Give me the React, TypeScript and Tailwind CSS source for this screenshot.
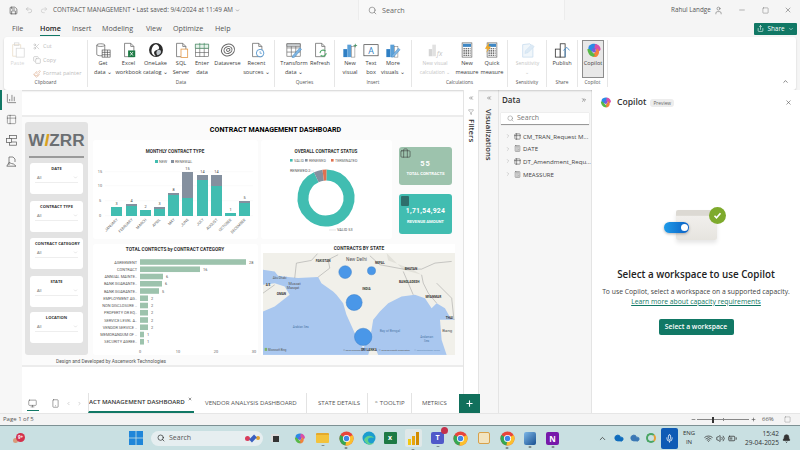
import React from "react";
import { Save, Undo2, Redo2, Search, User, Minus, Square, X, Share, ChevronDown, ChevronUp, ChevronLeft, ChevronRight, ChevronsLeft, ChevronsRight, Scissors, Copy, Paintbrush, Filter, Monitor, Smartphone, Plus, Wifi, Volume2, BatteryMedium, Mic, Bell, Cloud, Briefcase, Calculator, Table2, BarChart3 } from "lucide-react";

const B = "#5f5f5f";
const Doc = ({ c = B }: { c?: string }) => <path d="M4 1.5h7l3.5 3.5v11.5H4z M11 1.5V5h3.5" fill="#fff" stroke={c} strokeWidth="0.8" />;
const Bars = ({ a = "#2f7fc4", b = "#5aa0d8" }: { a?: string; b?: string }) => (<g><rect x="1.5" y="8" width="4.5" height="9" fill={a} /><rect x="6" y="3" width="4.5" height="14" fill={b} /><rect x="10.5" y="5" width="4" height="12" fill="#fff" stroke="#777" strokeWidth=".6" /></g>);
const Grid = ({ x = 1, y = 2, w = 15, h = 14, c = B }: { x?: number; y?: number; w?: number; h?: number; c?: string }) => (
  <g fill="none" stroke={c} strokeWidth=".7"><rect x={x} y={y} width={w} height={h} fill="#fff" /><path d={`M${x} ${y + h / 3}h${w}M${x} ${y + (2 * h) / 3}h${w}M${x + w / 3} ${y}v${h}M${x + (2 * w) / 3} ${y}v${h}`} /></g>
);
const Calc = () => (<g><rect x="3.5" y="1" width="11" height="16" fill="#fff" stroke="#555" strokeWidth=".7" /><rect x="4.5" y="2" width="9" height="3.5" fill="#3f88c5" /><path d="M5 7.5h8M5 10h8M5 12.5h8M5 15h8" stroke="#444" strokeWidth="1.2" strokeDasharray="1.6 .8" /></g>);
const CopilotMark = ({ s = 18 }: { s?: number }) => (
  <svg width={s} height={s} viewBox="0 0 18 18" fill="none">
    <path d="M5 3.5 C8 1.5 11 1.5 13 3 L10 9 L5 11 C3 8 3 5 5 3.5z" fill="#2b8ae6" />
    <path d="M10.5 2.5 C13.5 2 16.5 4.5 16.5 8 C16 9.5 14.5 10.5 13 10 L10 6.5z" fill="#d94fa8" />
    <path d="M13 7 C15.5 9 15.5 13 13 15 C11 16.5 8.5 16 7.5 14.5 L11 10z" fill="#f2823c" />
    <path d="M2.5 8 C3 11 4.5 15 8.5 15.5 C10 15.5 11 14 10 13 L6.5 9.5 C5 7.5 3 7 2.5 8z" fill="#58b947" />
    <path d="M7.5 7 L11 6.5 L11.5 10.5 L8 11z" fill="#7c5ad8" />
  </svg>
);

const I = ({ children }: { children: React.ReactNode }) => <svg width="16" height="16" viewBox="0 0 18 18" fill="none">{children}</svg>;

const icons: Record<string, React.ReactNode> = {
  get: <I><path d="M2 3.5C2 1.5 11 1.5 11 3.5V14C11 16 2 16 2 14z" fill="#fff" stroke={B} strokeWidth=".8" /><path d="M2 3.5C2 5.5 11 5.5 11 3.5" stroke={B} strokeWidth=".8" /><Grid x={8} y={9} w={9} h={8} c="#444" /></I>,
  excel: <I><Doc /><rect x="8" y="9.5" width="8" height="7.5" fill="#1d7a45" /><path d="M10.3 11.3l3.2 4M13.5 11.3l-3.2 4" stroke="#fff" strokeWidth=".9" /></I>,
  lake: <I><circle cx="9" cy="9" r="7.8" fill="#2a2a2a" /><path d="M9 2.5C13 4 14 8 10 9S6 13 9 16C4.5 15 3 11 4.5 7S8 3 9 2.5z" fill="#fff" /><path d="M11 9c3-1 4 1 3.5 3-.8 1.6-2.4 2.7-4 3C9 13 9 10.5 11 9z" fill="#bfc6cc" /></I>,
  sql: <I><Doc /><rect x="9" y="8" width="7.5" height="9.5" fill="#fff" stroke="#e39a4a" strokeWidth=".9" /></I>,
  enter: <I><Grid x={1.5} y={2.5} w={15} h={14} /><path d="M1.5 2.5h15v4.6h-15z" fill="#e8f2ec" stroke="#3c8a5c" strokeWidth=".7" /><path d="M6.5 1v6M11.5 1v6" stroke="#3c8a5c" strokeWidth=".7" /></I>,
  dv: <I><g stroke="#666" strokeWidth="1.1" fill="none"><ellipse cx="9" cy="9" rx="7.5" ry="6.5" transform="rotate(-25 9 9)" /><ellipse cx="9" cy="9" rx="4.6" ry="3.8" transform="rotate(-25 9 9)" /><ellipse cx="9.3" cy="9" rx="2" ry="1.5" transform="rotate(-25 9 9)" /></g></I>,
  recent: <I><Doc /><circle cx="12.5" cy="12.5" r="4.2" fill="#fff" stroke="#3b86c8" strokeWidth=".9" /><path d="M12.5 10.3v2.4h2" stroke="#3b86c8" strokeWidth=".7" /></I>,
  transform: <I><Grid x={1} y={2} w={15} h={14} /><path d="M1 2h15v3H1z" fill="#cfd3d6" stroke={B} strokeWidth=".6" /><path d="M7.5 15.5l8-9 2 1.7-8 9-2.5.6z" fill="#7fb5e2" stroke="#3f86c2" strokeWidth=".5" /></I>,
  refresh: <I><Doc /><path d="M9 12.5a3.6 3.6 0 0 1 6.2-2.2M16 12.5a3.6 3.6 0 0 1-6.2 2.2" stroke="#4aa564" strokeWidth="1.2" /></I>,
  newv: <I><Bars /><path d="M15 2v4M13 4h4" stroke="#3c8a5c" strokeWidth=".9" /></I>,
  text: <I><rect x="1" y="3" width="16" height="12.5" fill="#fff" stroke="#444" strokeWidth=".8" /><text x="9" y="13" fontSize="10" textAnchor="middle" fill="#2f7fc4" fontFamily="Open Sans">A</text></I>,
  more: <I><Bars /><path d="M8 15l7-8 2 1.6-7 8-2.4.6z" fill="#7fb5e2" stroke="#3f86c2" strokeWidth=".5" /></I>,
  calc: <I><g opacity=".35"><rect x="2" y="8" width="4" height="8" fill="#888" /><rect x="6" y="3" width="4" height="13" fill="#aaa" /><text x="11" y="16" fontSize="8" fontStyle="italic" fill="#555">fx</text></g></I>,
  meas: <I><Calc /></I>,
  quick: <I><Calc /><path d="M6 0L1 7.5h3L2.5 12 8 5H5z" fill="#f0a825" /></I>,
  sens: <I><g opacity=".4"><path d="M3 3l8-1 3.5 3.5v11.5H3z" fill="#dce9f5" stroke="#6ba3d3" strokeWidth=".8" /><path d="M6 10l7-7 3 2-7 7-3.5 1z" fill="#aacbe8" stroke="#6ba3d3" strokeWidth=".5" /></g></I>,
  pub: <I><rect x="1.5" y="8" width="5.5" height="9" fill="#fff" stroke="#333" strokeWidth=".9" /><rect x="7" y="2" width="5.5" height="15" fill="#fff" stroke="#333" strokeWidth=".9" /><path d="M12.5 17V8M10.5 9.5l4-3.5 3 3.5" stroke="#3b86c8" strokeWidth=".9" /></I>,
  copilot: <CopilotMark s={17} />,
};

function Btn({ w, icon, lines, ml = 0, dim, active }: { w: number; icon: string; lines: string[]; ml?: number; dim?: boolean; active?: boolean }) {
  return (
    <div style={{ width: w, marginLeft: ml }} className={`flex flex-col items-center shrink-0 ${active ? "bg-[#e8e8e8] border border-[#8c8c8c] h-[38px] pt-[1px]" : "pt-[2px]"}`}>
      <div className="h-[16px] flex items-center justify-center">{icons[icon]}</div>
      <div className={`mt-[1px] text-[5.6px] leading-[8.6px] text-center whitespace-nowrap ${dim ? "text-[#c4c4c4] text-[5px]" : "text-[#3c3c3c]"}`}>
        {lines.map((l) => <div key={l}>{l}</div>)}
      </div>
    </div>
  );
}

function Group({ w, label, children, pl = 0 }: { w: number; label: string; children: React.ReactNode; pl?: number }) {
  return (
    <div style={{ width: w, paddingLeft: pl }} className="h-[47px] mt-[3px] border-r border-[#e6e6e6] flex flex-col shrink-0">
      <div className="flex h-[38px]">{children}</div>
      <div className="h-[9px] text-[4.8px] leading-[9px] text-center text-[#555]" style={{ marginLeft: -pl }}>{label}</div>
    </div>
  );
}

const Slicer = ({ title, mt = 7 }: { title: string; mt?: number }) => (
  <div style={{ marginTop: mt }} className="w-[53px] h-[31px] mx-auto bg-white rounded-[3px] px-[5px] pt-[2px]">
    <div className="text-[4.1px] font-bold leading-[7px] text-center text-[#333] whitespace-nowrap">{title}</div>
    <div className="mt-[3px] flex justify-between items-center border-b border-[#eeeeee] pb-[1px] text-[4px] text-[#666] leading-[6px]"><span className="pl-[2px]">All</span><ChevronDown size={5} strokeWidth={1} className="text-[#888]" /></div>
  </div>
);

const monthly: [string, number, number, number][] = [
  ["JANUARY", 9, 9, 3], ["FEBRUARY", 10, 12, 4], ["MARCH", 6, 6, 2], ["APRIL", 7, 9, 3], ["MAY", 21, 23, 8], ["JUNE", 18, 44, 15], ["JULY", 36, 41, 14], ["AUGUST", 30, 41, 14], ["OCTOBER", 3, 3, 1], ["DECEMBER", 13, 15, 5],
];

function MonthlyChart() {
  const xs = [18, 33, 47, 61, 75, 89, 104, 118, 132, 146];
  const base = 76;
  return (
    <svg width="165" height="99" viewBox="0 0 165 99" className="block font-['Roboto',sans-serif]">
      <text x="82" y="13" fontSize="4.6" fontWeight="700" textAnchor="middle" fill="#333">MONTHLY CONTRACT TYPE</text>
      <rect x="62" y="20" width="3" height="3" fill="#41bdb1" /><text x="66" y="23" fontSize="3.8" fill="#666">NEW</text>
      <rect x="78" y="20" width="3" height="3" fill="#84909f" /><text x="82" y="23" fontSize="3.8" fill="#666">RENEWAL</text>
      {[[15, 33], [10, 47], [5, 62], [0, 77]].map(([v, y]) => (
        <g key={v}><text x="7" y={y} fontSize="3.8" fill="#666" textAnchor="middle">{v}</text><path d={`M12 ${y - 1.3}H160`} stroke="#f2f2f2" strokeWidth=".4" /></g>
      ))}
      {monthly.map(([m, n, t, v], i) => (
        <g key={m}>
          <rect x={xs[i]} y={base - t} width="11" height={t - n} fill="#84909f" />
          <rect x={xs[i]} y={base - n} width="11" height={n} fill="#41bdb1" />
          <text x={xs[i] + 5.5} y={base - t - 2} fontSize="3.8" textAnchor="middle" fill="#444">{v}</text>
          <text transform={`translate(${xs[i] + 7} 80) rotate(-45)`} fontSize="3.8" textAnchor="end" fill="#666">{m}</text>
        </g>
      ))}
    </svg>
  );
}

function arc(cx: number, cy: number, r: number, a0: number, a1: number) {
  const p = (a: number) => [cx + r * Math.sin((a * Math.PI) / 180), cy - r * Math.cos((a * Math.PI) / 180)];
  const [x0, y0] = p(a0);
  const [x1, y1] = p(a1);
  return `M${x0} ${y0}A${r} ${r} 0 ${a1 - a0 > 180 ? 1 : 0} 1 ${x1} ${y1}`;
}

function Donut() {
  const cx = 65, cy = 58;
  return (
    <svg width="131" height="99" viewBox="0 0 131 99" className="block font-['Roboto',sans-serif]">
      <text x="65" y="13" fontSize="4.6" fontWeight="700" textAnchor="middle" fill="#333">OVERALL CONTRACT STATUS</text>
      <rect x="29" y="19" width="2.6" height="2.6" fill="#41bdb1" /><text x="33" y="22" fontSize="3.7" fill="#666">VALID</text>
      <rect x="44" y="19" width="2.6" height="2.6" fill="#84909f" /><text x="48" y="22" fontSize="3.7" fill="#666">RENEWED</text>
      <rect x="70" y="19" width="2.6" height="2.6" fill="#e0704f" /><text x="74" y="22" fontSize="3.7" fill="#666">TERMINATED</text>
      <path d={arc(cx, cy, 23, 1, 335)} stroke="#41bdb1" strokeWidth="11" fill="none" />
      <path d={arc(cx, cy, 23, 335, 353)} stroke="#84909f" strokeWidth="11" fill="none" />
      <path d={arc(cx, cy, 23, 353, 361)} stroke="#e0704f" strokeWidth="11" fill="none" />
      <text x="29" y="32" fontSize="3.8" fill="#555" textAnchor="start">RENEWED 2</text>
      <path d="M46 31H53" stroke="#bbb" strokeWidth=".4" />
      <text x="76" y="91" fontSize="3.8" fill="#555">VALID 53</text>
      <path d="M68 90H75" stroke="#bbb" strokeWidth=".4" />
    </svg>
  );
}

const cats: [string, number, string][] = [
  ["AGREEMENT", 106, "28"], ["CONTRACT", 60, "16"], ["ANNUAL MAINTE..", 23, "6"], ["BANK GUARANTE..", 22, "6"], ["BANK GUARANTE..", 19, "5"], ["EMPLOYMENT AG..", 8, "2"], ["NON DISCLOSURE ..", 8, "2"], ["PROPERTY OR EQ..", 8, "2"], ["SERVICE LEVEL A..", 8, "2"], ["VENDOR SERVICE ..", 8, "2"], ["MEMORANDUM OF ..", 4, "1"], ["SECURITY AGREE..", 4, "1"],
];

function CatChart() {
  return (
    <svg width="165" height="111" viewBox="0 0 165 111" className="block font-['Roboto',sans-serif]">
      <text x="82" y="6.5" fontSize="4.8" fontWeight="700" textAnchor="middle" fill="#333">TOTAL CONTRCTS by CONTRACT CATEGORY</text>
      {cats.map(([c, w, v], i) => {
        const y = 18 + i * 7.25;
        return (
          <g key={i}>
            <text x="44" y={y + 1.5} fontSize="3.9" textAnchor="end" fill="#555">{c}</text>
            <rect x="47" y={y - 2.8} width={w} height="5.6" fill="#9dc3ad" />
            <text x={47 + w + 3} y={y + 1.5} fontSize="3.9" fill="#555">{v}</text>
          </g>
        );
      })}
      {[[0, 47], [10, 85], [20, 123], [30, 161]].map(([v, x]) => <text key={v} x={x} y="108.5" fontSize="3.9" textAnchor="middle" fill="#666">{v}</text>)}
    </svg>
  );
}

function MapView() {
  const L = "#f1f0ea";
  return (
    <svg width="192" height="102" viewBox="25 40 575 305" className="block font-['Roboto',sans-serif]">
      <rect x="25" y="40" width="575" height="305" fill="#a9c7ef" />
      <path d="M25 40H600V240L585 232 570 205 545 190 530 205 510 175 480 165 440 170 400 190 375 215 355 240 350 270 345 290 325 325 300 280 275 225 265 190 245 165 235 155 200 130 190 112 130 115 100 112 70 108 60 95 25 90z" fill={L} />
      <path d="M25 135L60 130 90 140 105 165 60 200 25 215z" fill={L} />
      <path d="M555 240L560 300 575 345H600V240z" fill={L} />
      <path d="M345 328L362 325 370 345H340z" fill={L} />
      <path d="M395 40L445 90 500 105 470 88 400 62z" fill="#e2e1da" />
      <g fill="none" stroke="#8a8a8a" strokeWidth="1.3">
        <path d="M120 115L125 70 170 62 188 42" />
        <path d="M190 112L225 85 220 60 250 45" />
        <path d="M345 48L375 75 445 88 500 88 540 70 590 65" />
        <path d="M500 105L505 130 520 160 545 190" />
        <path d="M445 95L460 130 475 165" />
        <path d="M25 160L60 135" />
        <path d="M545 130L590 175 597 240" />
      </g>
      <g fill="#4a97e8" stroke="#3a7fc9" strokeWidth="1.5">
        <circle cx="271" cy="97" r="19" /><circle cx="350" cy="93" r="12" /><circle cx="298" cy="188" r="24" /><circle cx="325" cy="291" r="26" />
      </g>
      <g fill="#333" fontWeight="700" fontSize="9.5" textAnchor="middle">
        <text x="205" y="68">PAKISTAN</text><text x="375" y="72">NEPAL</text><text x="468" y="91">BHUTAN</text><text x="463" y="131">BANGLADESH</text><text x="335" y="151">INDIA</text><text x="535" y="174">MYANMAR</text><text x="583" y="236">THAI</text><text x="80" y="167">OMAN</text><text x="40" y="140">A E</text>
        <text x="342" y="334">SRI LANKA</text>
      </g>
      <g fill="#555" textAnchor="middle">
        <text x="305" y="63" fontSize="14">New Delhi</text><text x="120" y="135" fontSize="11">Muscat</text><text x="115" y="147" fontSize="11">Masqat</text><text x="75" y="117" fontSize="9">Abu Dhabi</text><text x="577" y="275" fontSize="13">Bang</text>
      </g>
      <g fill="#4d78a8" textAnchor="middle" fontSize="9">
        <text x="138" y="265">Arabian Sea</text><text x="405" y="276" fontSize="10">Bay of Bengal</text><text x="515" y="295">Andaman</text><text x="515" y="306">Sea</text>
      </g>
      <rect x="30" y="324" width="7" height="9" fill="#7fb36a" />
      <text x="40" y="333" fontSize="8.5" fill="#555">Microsoft Bing</text>
      <text x="265" y="334" fontSize="7" fill="#555">© 2025 TomTom</text>
      <text x="372" y="334" fontSize="7" fill="#555">© 2025 Microsoft Corporation</text>
      <text x="478" y="334" fontSize="7" fill="#6a8fb8">© OpenStreetMap  Terms</text>
    </svg>
  );
}

const Chrome = ({ s = 15 }: { s?: number }) => (
  <svg width={s} height={s} viewBox="0 0 16 16">
    <circle cx="8" cy="8" r="7.5" fill="#e8453c" />
    <path d="M8 8L1.5 4.2A7.5 7.5 0 0 0 7 15.4z" fill="#34a853" />
    <path d="M8 8L7 15.4A7.5 7.5 0 0 0 14.5 4.3z" fill="#fbc02d" />
    <circle cx="8" cy="8" r="3.8" fill="#fff" /><circle cx="8" cy="8" r="2.9" fill="#3f86e8" />
  </svg>
);

const Tree = ({ label, calc }: { label: string; calc?: boolean }) => (
  <div className="flex items-center h-[12.6px] pl-[6px] text-[6.1px] text-[#444] whitespace-nowrap overflow-hidden">
    <ChevronRight size={6} strokeWidth={1} className="text-[#666] shrink-0" />
    <span className="ml-[3px] mr-[2px] shrink-0 text-[#555]">{calc ? <Calculator size={7} strokeWidth={1.6} /> : <Table2 size={7} strokeWidth={2} />}</span>
    {label}
  </div>
);

const dot = <span className="absolute -bottom-[3px] left-1/2 -translate-x-1/2 w-[3px] h-[1.5px] bg-[#7f8c8f] rounded" />;
const Slot = ({ w, children, d }: { w: number; children: React.ReactNode; d?: boolean }) => (
  <div style={{ width: w }} className="relative flex justify-center items-center shrink-0">{children}{d && dot}</div>
);

function Taskbar() {
  return (
    <div className="h-[25px] border-t border-[#7d9194] bg-[#c9e0e2] flex items-center shrink-0 relative">
      <div className="w-[128px] pl-[13px] shrink-0">
        <span className="block w-[12px] h-[11px] relative">
          <span className="absolute left-0 top-[5px] w-[5px] h-[5px] rounded-full bg-[#d99a7a]" />
          <span className="absolute left-[3px] top-0 w-[9px] h-[9px] rounded-full bg-[#d3304c] text-[4.5px] text-white font-bold text-center leading-[9px]">9+</span>
        </span>
      </div>
      <svg width="16" height="16" viewBox="0 0 16 16" className="shrink-0"><g fill="#1f86d9"><rect x="1" y="1" width="6.6" height="6.6" /><rect x="8.4" y="1" width="6.6" height="6.6" /><rect x="1" y="8.4" width="6.6" height="6.6" /><rect x="8.4" y="8.4" width="6.6" height="6.6" /></g></svg>
      <div className="ml-[7px] w-[112px] h-[15px] rounded-full bg-[#e6eef0] flex items-center pl-[6px] text-[7px] text-[#555] shrink-0 justify-between pr-[3px]">
        <span className="flex items-center gap-[4px]"><Search size={8} strokeWidth={2} className="text-[#222]" />Search</span>
        <span className="flex gap-[1px] items-center"><span className="w-[5px] h-[5px] bg-[#d83b5a] rounded-full" /><span className="w-[4px] h-[7px] bg-[#3a5fc0] rotate-45" /><span className="w-[4px] h-[4px] bg-[#e0a030] rounded-full" /></span>
      </div>
      <Slot w={24}><span className="w-[8px] h-[8px] bg-[#333] border-t-2 border-l-2 border-[#ddd]" /></Slot>
      <Slot w={24}><CopilotMark s={13} /></Slot>
      <Slot w={23} d><span className="w-[13px] h-[10px] rounded-[1px] bg-[#f3c33c] border-t-2 border-[#e4a92b]" /></Slot>
      <Slot w={24} d><Chrome /></Slot>
      <Slot w={22}><svg width="14" height="14" viewBox="0 0 14 14"><circle cx="7" cy="7" r="6.5" fill="#1b9dcf" /><path d="M2 9C3 5 9 3 12 7 10 6 6 6 6 9s3 4 6 3c-3 3-8 2-10-3z" fill="#5fd08f" /></svg></Slot>
      <Slot w={20}><span className="w-[13px] h-[12px] bg-[#1d7a45] rounded-[1px] text-white text-[7px] font-bold leading-[12px] text-center">x</span></Slot>
      <Slot w={26} d><span className="w-[17px] h-[18px] bg-[#dfe8e8] flex items-end justify-center gap-[1px] p-[2px] rounded-[2px]"><span className="w-[3px] h-[6px] bg-[#f2c811]" /><span className="w-[3px] h-[9px] bg-[#e8a50c]" /><span className="w-[3px] h-[13px] bg-[#d18b00]" /></span></Slot>
      <Slot w={23} d><span className="relative w-[13px] h-[12px] bg-[#5059c9] rounded-[2px] text-white text-[7px] font-bold leading-[12px] text-center">T<span className="absolute -top-[5px] -right-[4px] w-[7px] h-[7px] rounded-full bg-[#c4314b]" /></span></Slot>
      <Slot w={23}><Chrome /></Slot>
      <Slot w={24}><span className="w-[12px] h-[12px] bg-[#f2e4c0] border border-[#d8a14a] rounded-[2px]" /></Slot>
      <Slot w={22} d><Chrome /></Slot>
      <Slot w={23} d><span className="w-[12px] h-[13px] rounded-[2px] bg-[linear-gradient(135deg,#7db8e8,#174f90)]" /></Slot>
      <Slot w={23} d><span className="w-[13px] h-[13px] bg-[#7719aa] rounded-[2px] text-white text-[8px] font-bold leading-[13px] text-center">N</span></Slot>
      <div className="w-[34px] shrink-0" />
      <ChevronUp size={9} className="text-[#333] shrink-0" />
      <span className="ml-[7px] shrink-0"><Cloud size={10} fill="#0f6cbd" className="text-[#0f6cbd]" /></span>
      <span className="ml-[6px] shrink-0"><Cloud size={10} fill="#3c78b5" className="text-[#3c78b5]" /></span>
      <span className="ml-[6px] w-[10px] h-[10px] rounded-full border-2 border-[#4aa564] border-r-[#e8a033] shrink-0" />
      <div className="ml-[5px] w-[17px] h-[21px] rounded-[2px] bg-[#0f5bb5] flex items-center justify-center shrink-0"><Mic size={9} className="text-white" /></div>
      <div className="ml-[3px] w-[16px] text-[6px] leading-[9px] text-center text-[#333] shrink-0">ENG<br />IN</div>
      <div className="ml-[7px] flex gap-[3px] shrink-0 text-[#333]"><Wifi size={9} /><Volume2 size={9} /><BatteryMedium size={9} /></div>
      <div className="ml-[2px] w-[40px] text-[6.5px] leading-[9.5px] text-right text-[#333] shrink-0">15:42<br />29-04-2025</div>
      <Bell size={9} fill="#333" className="ml-[3px] text-[#333] shrink-0" />
    </div>
  );
}

export default function App() {
  return (
    <div className="w-[800px] h-[450px] overflow-hidden flex flex-col bg-[#f5f5f5] font-['Open_Sans',sans-serif] text-[#333]">
      {/* title bar */}
      <div className="h-[20px] flex items-center shrink-0 text-[#555]">
        <Save size={9} className="ml-[9px] text-[#333] shrink-0" strokeWidth={1.5} />
        <Undo2 size={8} className="ml-[7px] text-[#aaa] shrink-0" strokeWidth={1.5} />
        <Redo2 size={8} className="ml-[7px] text-[#bbb] shrink-0" strokeWidth={1.5} />
        <span className="ml-[5px] text-[6.3px] w-[174px] shrink-0 whitespace-nowrap text-[#555]">CONTRACT MANAGEMENT  •  Last saved: 9/4/2024 at 11:49 AM  <ChevronDown size={5} className="inline" /></span>
        <div className="ml-[131px] w-[207px] shrink-0 h-[20px] border-x border-[#ececec] bg-[#f8f8f8] flex items-center pl-[9px] text-[7.2px] text-[#666] gap-[5px]"><Search size={9} strokeWidth={1.5} />Search</div>
        <span className="ml-[106px] text-[6.3px] whitespace-nowrap w-[37px] shrink-0">Rahul Landge</span>
        <User size={9} strokeWidth={1.3} className="ml-[6px] shrink-0" />
        <Minus size={8} strokeWidth={1.3} className="ml-[15px] shrink-0" />
        <Square size={7} strokeWidth={1.3} className="ml-[16px] shrink-0" />
        <X size={8} strokeWidth={1.5} className="ml-[15px] shrink-0" />
      </div>
      {/* menu */}
      <div className="h-[17px] flex items-center shrink-0 text-[7.2px] text-[#555] relative">
        <span className="ml-[12px] w-[28px]">File</span>
        <span className="w-[32px] font-semibold text-[#222] relative">Home<span className="absolute left-0 w-[20px] -bottom-[2px] h-[1px] bg-[#117865]" /></span>
        <span className="w-[30px]">Insert</span>
        <span className="w-[44px]">Modeling</span>
        <span className="w-[27px]">View</span>
        <span className="w-[42px]">Optimize</span>
        <span>Help</span>
        <div className="ml-auto mr-[3px] w-[43px] h-[12px] bg-[#117865] rounded-[1px] text-white text-[6.4px] flex items-center justify-center gap-[3px]"><Share size={7} />Share<ChevronDown size={6} /></div>
      </div>
      {/* ribbon */}
      <div className="h-[53px] mx-[4px] bg-white rounded-[3px] shadow-[0_1px_2px_rgba(0,0,0,.18)] flex shrink-0 relative">
        <Group w={84} label="Clipboard">
          <div className="w-[27px] flex flex-col items-center pt-[2px] opacity-40">
            <svg width="16" height="16" viewBox="0 0 16 18" fill="none"><path d="M2 3h9v13H2z" stroke="#c9a66b" strokeWidth=".8" /><rect x="6" y="7" width="9" height="10" fill="#fff" stroke="#999" strokeWidth=".8" /><rect x="4" y="1" width="5" height="3" stroke="#999" strokeWidth=".8" /></svg>
            <span className="text-[5.4px] mt-[1px] text-[#999] leading-[8.6px]">Paste</span>
          </div>
          <div className="flex flex-col text-[5.5px] leading-[13.5px] text-[#bdbdbd] ml-[2px]">
            <span className="flex items-center gap-[3px]"><Scissors size={7} />Cut</span>
            <span className="flex items-center gap-[2px]"><Copy size={8} />Copy</span>
            <span className="flex items-center gap-[2px] whitespace-nowrap"><Paintbrush size={8} className="text-[#e3b9a0]" />Format painter</span>
          </div>
        </Group>
        <Group w={187} pl={2} label="Data">
          <Btn w={26} icon="get" lines={["Get", "data ⌄"]} />
          <Btn w={25} icon="excel" lines={["Excel", "workbook"]} />
          <Btn w={29} icon="lake" lines={["OneLake", "catalog ⌄"]} />
          <Btn w={22} icon="sql" lines={["SQL", "Server"]} />
          <Btn w={20} icon="enter" lines={["Enter", "data"]} />
          <Btn w={31} icon="dv" lines={["Dataverse"]} />
          <Btn w={27} icon="recent" lines={["Recent", "sources ⌄"]} />
        </Group>
        <Group w={60} pl={4} label="Queries">
          <Btn w={30} icon="transform" lines={["Transform", "data ⌄"]} />
          <Btn w={22} icon="refresh" lines={["Refresh"]} />
        </Group>
        <Group w={77} pl={4} label="Insert">
          <Btn w={22} icon="newv" lines={["New", "visual"]} />
          <Btn w={20} icon="text" lines={["Text", "box"]} />
          <Btn w={24} icon="more" lines={["More", "visuals ⌄"]} />
        </Group>
        <Group w={96} pl={8} label="Calculations">
          <Btn w={30} icon="calc" dim lines={["New visual", "calculation ⌄"]} />
          <Btn w={24} ml={5} icon="meas" lines={["New", "measure"]} />
          <Btn w={24} ml={1} icon="quick" lines={["Quick", "measure"]} />
        </Group>
        <Group w={39} pl={3} label="Sensitivity">
          <Btn w={33} icon="sens" dim lines={["Sensitivity", "⌄"]} />
        </Group>
        <Group w={31} pl={1} label="Share">
          <Btn w={28} icon="pub" lines={["Publish"]} />
        </Group>
        <Group w={30} pl={4} label="Copilot">
          <Btn w={22} icon="copilot" active lines={["Copilot"]} />
        </Group>
        <ChevronUp size={7} className="absolute right-[7px] bottom-[5px] text-[#333]" />
      </div>
      {/* main */}
      <div className="h-[323px] flex shrink-0 bg-white">
        <div className="w-[22px] shrink-0 bg-[#f7f7f7] flex flex-col items-center pt-[3px] gap-[10px] relative text-[#555]">
          <span className="absolute left-0 top-0 w-[1.5px] h-[20px] bg-[#117865]" />
          <BarChart3 size={11} strokeWidth={1.4} />
          <Table2 size={11} strokeWidth={1.1} />
          <svg width="11" height="11" viewBox="0 0 11 11" fill="none" stroke="#555" strokeWidth=".7"><rect x="3.5" y=".5" width="7" height="3.2" /><rect x="3.5" y="7" width="7" height="3.2" /><rect x=".5" y="3.5" width="5" height="4" fill="#f7f7f7" /></svg>
          <svg width="11" height="11" viewBox="0 0 11 11" fill="none" stroke="#555" strokeWidth=".7"><path d="M3 9V1h4l2 2v3" /><path d="M3 1v0M.8 10.2L3 6.5l2.5 1 2 .5 2.5 2.2z" /></svg>
        </div>
        <div className="w-[441px] shrink-0 flex flex-col">
          <div className="h-[25px] bg-white" />
          <div className="h-[252px] bg-[#fbfbfb] border-y-2 border-[#ececec] flex pt-[5px] pl-[3px] relative">
            <div className="w-[63px] h-[233px] bg-[#e3e3e3] rounded-[3px] shrink-0 pt-[6px]">
              <div className="text-[17.2px] font-bold leading-[24px] text-center text-[#6b6f72] font-['Liberation_Sans',sans-serif]">W<span className="text-[#d9a21f] italic">I</span>ZRR</div>
              <div className="mx-[4px] mt-[4px] h-[1.5px] bg-[#9a9a9a]" />
              <Slicer title="DATE" mt={5} />
              <Slicer title="CONTRACT TYPE" />
              <Slicer title="CONTRACT CATEGORY" mt={6} />
              <Slicer title="STATE" />
              <Slicer title="LOCATION" mt={5} />
            </div>
            <div className="ml-[5px] w-[365px] font-['Roboto',sans-serif]">
              <div className="h-[18px] text-[7.1px] font-bold text-black text-center leading-[15px]">CONTRACT MANAGEMENT DASHBOARD</div>
              <div className="flex h-[99px]">
                <div className="w-[165px] bg-white rounded-[3px] shrink-0"><MonthlyChart /></div>
                <div className="ml-[3px] w-[131px] bg-white rounded-[3px] shrink-0"><Donut /></div>
                <div className="ml-[7px] w-[53px] flex flex-col pt-[7px] gap-[9px] shrink-0 text-white text-center">
                  <div className="h-[38px] rounded-[3px] bg-[#9dc3ad] relative pt-[11px]">
                    <Briefcase size={11} strokeWidth={1.2} className="absolute left-[1px] top-[1px] text-[#333]" />
                    <div className="text-[7.5px] font-bold leading-[11px] tracking-[1px]">55</div>
                    <div className="text-[4.2px] font-bold mt-[2px] leading-[6px]">TOTAL CONTRACTS</div>
                  </div>
                  <div className="h-[40px] rounded-[3px] bg-[#41bdb1] relative pt-[12px]">
                    <span className="absolute left-[2px] top-[2px] w-[8px] h-[10px] bg-[#2e6f6c] rounded-[1px]" />
                    <div className="text-[6.8px] font-bold leading-[10px] tracking-[.3px]">1,71,54,924</div>
                    <div className="text-[4.2px] font-bold mt-[3px] leading-[6px]">REVENUE AMOUNT</div>
                  </div>
                </div>
              </div>
              <div className="flex mt-[5px] h-[111px]">
                <div className="w-[165px] bg-white rounded-[3px] shrink-0"><CatChart /></div>
                <div className="ml-[3px] w-[194px] bg-white shrink-0 pl-[2px]">
                  <div className="h-[9px] text-[4.8px] font-bold text-center leading-[9px] text-[#333]">CONTRACTS BY STATE</div>
                  <MapView />
                </div>
              </div>
            </div>
            <div className="absolute left-[34px] top-[241px] text-[4.9px] leading-[6px] text-[#555] whitespace-nowrap font-['Roboto',sans-serif]">Design and Developed by Ascenwork Technologies</div>
          </div>
          <div className="h-[25px] bg-white" />
          <div className="h-[21px] pt-[1px] flex items-stretch bg-white text-[6.1px] text-[#555] whitespace-nowrap">
            <div className="w-[66px] flex items-center shrink-0 text-[#444] relative">
              <Monitor size={9} strokeWidth={1.3} className="ml-[6px]" />
              <span className="absolute left-[5px] bottom-[2px] w-[12px] h-[1px] bg-[#117865]" />
              <Smartphone size={9} strokeWidth={1.3} className="ml-[14px]" />
              <ChevronLeft size={5} className="ml-[6px] text-[#999]" />
              <ChevronRight size={5} className="ml-[6px] text-[#999]" />
            </div>
            <div className="w-[106px] border-b-2 border-[#117865] flex items-center font-semibold text-[#333] text-[6.1px] relative border-l border-l-[#e3e3e3] overflow-hidden">ACT MANAGEMENT DASHBOARD<X size={4} strokeWidth={3} className="absolute right-[2px] top-[4px]" /></div>
            <div className="w-[113px] border-r border-[#e3e3e3] flex items-center pl-[11px]">VENDOR ANALYSIS DASHBOARD</div>
            <div className="w-[61px] border-r border-[#e3e3e3] flex items-center pl-[11px]">STATE DETAILS</div>
            <div className="w-[44px] border-r border-[#e3e3e3] flex items-center pl-[7px] gap-[2px]"><span className="text-[5px]">≈</span>TOOLTIP</div>
            <div className="w-[38px] flex items-center pl-[10px]">METRICS</div>
            <div className="w-[13px] shrink-0" />
          </div>
        </div>
        <div className="w-[16px] shrink-0 border-x border-[#e4e4e4] bg-white flex flex-col items-center pt-[5px] text-[#444] relative z-10">
          <ChevronsLeft size={6} />
          <Filter size={6} className="mt-[8px] text-[#888]" />
          <span className="[writing-mode:vertical-rl] text-[7.8px] font-semibold mt-[4px] text-[#333]">Filters</span>
          <div className="absolute -left-[5px] bottom-0 w-[21px] h-[19px] bg-[#11705c] flex items-center justify-center"><Plus size={9} strokeWidth={3} className="text-white" /></div>
        </div>
        <div className="w-[20px] shrink-0 border-r border-[#e4e4e4] bg-[#f6f6f6] flex flex-col items-center pt-[5px] text-[#444]">
          <ChevronsLeft size={6} />
          <span className="[writing-mode:vertical-rl] text-[7.8px] font-semibold mt-[8px] text-[#333]">Visualizations</span>
        </div>
        <div className="w-[93px] shrink-0 bg-[#f6f6f6] border-r border-[#e4e4e4] flex flex-col">
          <div className="flex items-center justify-between h-[19px] pl-[3px] pr-[4px] text-[8px] font-semibold text-[#333]">Data<ChevronsRight size={6} /></div>
          <div className="mx-[2px] mt-[4px] h-[12px] bg-white border-b border-[#999] flex items-center pl-[6px] gap-[3px] text-[7px] text-[#777] shadow-[0_0_1px_rgba(0,0,0,.2)]"><Search size={7} strokeWidth={1.5} />Search</div>
          <div className="mt-[5px]">
            <Tree label="CM_TRAN_Request M..." />
            <Tree label="DATE" calc />
            <Tree label="DT_Amendment_Requ..." />
            <Tree label="MEASSURE" calc />
          </div>
        </div>
        <div className="flex-1 bg-white flex flex-col items-center relative">
          <div className="w-full h-[24px] flex items-center pl-[7px] pr-[8px] pt-[1px]">
            <CopilotMark s={13} />
            <span className="ml-[5px] text-[8.6px] font-semibold text-[#333]">Copilot</span>
            <span className="ml-[4px] px-[3px] h-[8px] leading-[8px] rounded-[3px] bg-[#ededed] text-[4.8px] text-[#666]">Preview</span>
            <X size={7} className="ml-auto text-[#555]" />
          </div>
          <div className="mt-[93px] w-[64px] h-[40px] relative">
            <div className="absolute left-[12px] top-[3px] w-[41px] h-[30px] rounded-[2px] bg-[linear-gradient(180deg,#dcd9d3_0,#dcd9d3_18%,#f1efec_20%,#e6e4df_100%)] shadow-[0_3px_4px_rgba(0,0,0,.1)]" />
            <div className="absolute left-0 top-[15px] w-[25px] h-[11px] rounded-full bg-[linear-gradient(90deg,#1f9be8,#0a5fc4)] shadow-[0_1px_3px_rgba(0,0,0,.3)]"><span className="absolute right-[1.5px] top-[2px] w-[7px] h-[7px] bg-white rounded-full" /></div>
            <div className="absolute left-[45px] top-0 w-[17px] h-[17px] rounded-full bg-[#7eaa2c] flex items-center justify-center">
              <svg width="9" height="9" viewBox="0 0 9 9"><path d="M1.5 4.8l2 2 4-4.5" fill="none" stroke="#fff" strokeWidth="1.6" /></svg>
            </div>
          </div>
          <div className="mt-[21px] text-[9.8px] font-semibold text-[#222] whitespace-nowrap leading-[14px]">Select a workspace to use Copilot</div>
          <div className="mt-[5px] text-[6.8px] text-[#444] text-center leading-[10px] whitespace-nowrap">To use Copilot, select a workspace on a supported capacity.<br /><span className="text-[#117865] underline">Learn more about capacity requirements</span></div>
          <div className="mt-[12px] w-[75px] h-[16px] bg-[#117865] rounded-[2px] text-white text-[6.8px] font-semibold flex items-center justify-center">Select a workspace</div>
        </div>
      </div>
      {/* status */}
      <div className="h-[12px] shrink-0 flex items-center bg-[#f4f4f4] border-t border-[#e6e6e6] text-[6px] text-[#555] pl-[3px]">
        Page 1 of 5
        <div className="ml-auto flex items-center">
          <Minus size={5} strokeWidth={3} />
          <span className="ml-[1px] w-[52px] h-[1px] bg-[#888] relative"><span className="absolute left-[15px] -top-[2.5px] w-[2px] h-[6px] bg-[#333]" /><span className="absolute left-[26px] -top-[1px] w-[1px] h-[3px] bg-[#888]" /></span>
          <Plus size={5} strokeWidth={3} className="ml-[2px]" />
          <span className="ml-[6px] w-[17px]">66%</span>
          <Square size={7} strokeWidth={1} className="ml-[5px] mr-[9px]" />
        </div>
      </div>
      <Taskbar />
    </div>
  );
}
